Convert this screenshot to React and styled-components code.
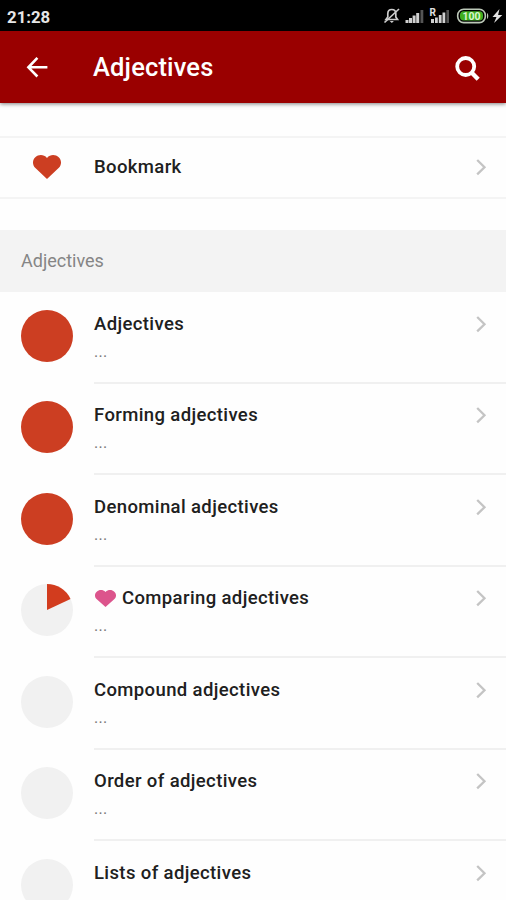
import React from 'react'
import styled, { createGlobalStyle } from 'styled-components'

const GlobalStyle = createGlobalStyle`
  * {
    box-sizing: border-box;
  }
  body {
    margin: 0;
    background: #fefefe;
    font-family: Roboto, "Noto Sans", sans-serif;
  }
  svg {
    display: block;
    flex: none;
  }
`

const Screen = styled.div`
  height: 900px;
  overflow: hidden;
  background: #fefefe;
`

const StatusBar = styled.div`
  display: flex;
  align-items: center;
  justify-content: space-between;
  height: 31px;
  padding: 0 0 0 7px;
  background: #000;
`

const Clock = styled.span`
  padding-top: 2px;
  color: #e6e6e6;
  font-size: 16.8px;
  font-weight: 700;
  line-height: 20px;
`

const Toolbar = styled.header`
  display: flex;
  align-items: center;
  height: 72px;
  padding: 0 25px 0 26px;
  background: #9a0000;
  box-shadow: 0 1px 4px rgba(0, 0, 0, 0.5);
`

const Title = styled.h1`
  flex: 1;
  margin: 0 0 0 45px;
  color: #fff;
  font-size: 25.5px;
  font-weight: 500;
  line-height: 32px;
  letter-spacing: 0.15px;
`

const BookmarkRow = styled.div`
  display: flex;
  align-items: center;
  height: 63px;
  margin: 33px 0 31px;
  padding: 0 18px 2px 33px;
  border-top: 2px solid #f4f4f4;
  border-bottom: 2px solid #f4f4f4;
`

const Label = styled.div`
  display: flex;
  align-items: center;
  flex: 1;
  margin-left: ${props => props.$indent || 0}px;
  color: #202020;
  font-size: 18.5px;
  font-weight: 500;
  line-height: 24px;
  letter-spacing: 0.38px;
`

const SectionHeader = styled.div`
  height: 61.5px;
  padding-left: 21px;
  background: #f3f3f3;
  color: #858585;
  font-size: 18px;
  line-height: 61px;
`

const Item = styled.div`
  display: flex;
  height: 91.5px;
  padding: 18px 0 0 21px;
`

const ItemBody = styled.div`
  flex: 1;
  height: 92px;
  margin: -18px 0 0 21px;
  padding: 20px 18px 0 0;
  border-bottom: 2px solid #f0f0f0;
`

const ItemHead = styled.div`
  display: flex;
  align-items: center;
`

const Subtitle = styled.div`
  margin-top: 4px;
  color: #777;
  font-size: 16px;
  line-height: 24px;
  letter-spacing: 0.3px;
`

const Emoji = styled.span`
  display: block;
  margin: 0 6px 0 1px;
`

const StatusIcons = () => (
  <svg width="130" height="31" viewBox="376 0 130 31">
    {/* muted bell */}
    <g fill="none" stroke="#ccc" strokeWidth="1.7">
      <path d="M386 19.5h11.5l-1.7-2.5v-3.3c0-2.6-1.7-4.2-4-4.2s-4 1.6-4 4.2V17z" />
      <path d="M384.5 22.5L399 9" />
    </g>
    <path d="M389.7 21h4.2l-2.1 2z" fill="#ccc" />
    {/* first sim */}
    <g fill="#d0d0d0">
      <path d="M405.5 20h3v3h-3zM409 18h3v5h-3zM412.6 15.5h3V23h-3zM416.2 13h3v10h-3z" />
      <path d="M420.5 10h2.8v13h-2.8z" fill="#555" />
    </g>
    {/* second sim */}
    <text x="429.5" y="15.5" fill="#e0e0e0" fontSize="10" fontWeight="700">R</text>
    <g fill="#d0d0d0">
      <path d="M431 19h3v4h-3zM435 17.5h2.8V23H435zM438.8 15h2.8v8h-2.8zM442.5 12.5h2.8V23h-2.8z" />
      <path d="M446.4 10h2.6v13h-2.6z" fill="#555" />
    </g>
    {/* battery */}
    <rect x="457.7" y="9.2" width="27.6" height="13.4" rx="6" fill="#000" stroke="#bcc8b8" strokeWidth="1.6" />
    <rect x="460" y="11.2" width="23" height="9.4" rx="3.8" fill="#3fae20" />
    <path d="M487 13c1.7 1 1.7 5 0 6z" fill="#bcc8b8" />
    <text x="471.5" y="19.6" textAnchor="middle" fill="#d9f5cf" fontSize="10.5" fontWeight="700">100</text>
    <path d="M499.5 9l-7 8h4l-2.5 6 8.3-8h-4.2z" fill="#e2e2e2" />
  </svg>
)

const BackArrow = () => (
  <svg width="22" height="22" viewBox="0 0 22 22" fill="none" stroke="#fff" strokeWidth="2.6">
    <path d="M11.4 1.8L2.4 11.3l9 9.2M2.4 11.3h19" />
  </svg>
)

const SearchIcon = () => (
  <svg width="27" height="27" viewBox="0 0 27 27" fill="none" stroke="#fff">
    <circle cx="11.7" cy="12.5" r="8.5" strokeWidth="3.8" />
    <path d="M17.5 18.5l6.7 6.7" strokeWidth="4.4" />
  </svg>
)

const Heart = ({ width, height, color }) => (
  <svg width={width} height={height} viewBox="0 0 28 25" preserveAspectRatio="none" fill={color}>
    <path d="M14 25L2.4 13.6C-.8 10.400-.8 5.400 2.300 2.400 5.500-.7 10.700-.8 14 3c3.300-3.800 8.500-3.700 11.700-.6 3.100 3 3.100 8-.1 11.200z" />
  </svg>
)

const Chevron = () => (
  <svg width="14" height="18" viewBox="0 0 14 18" fill="none" stroke="#c4c4c4" strokeWidth="2.3">
    <path d="M3.2 2l7.3 7.2-7.3 7.2" />
  </svg>
)

const Progress = ({ value }) => {
  const angle = value * 2 * Math.PI
  const x = 26 + 26 * Math.sin(angle)
  const y = 26 - 26 * Math.cos(angle)

  return (
    <svg width="52" height="52" viewBox="0 0 52 52">
      <circle cx="26" cy="26" r="26" fill={value === 1 ? '#cc3e22' : '#f1f1f1'} />
      {value > 0 && value < 1 && (
        <path d={`M26 26V0A26 26 0 0 1 ${x} ${y}z`} fill="#d23c1e" />
      )}
    </svg>
  )
}

const lessons = [
  { title: 'Adjectives', subtitle: '...', value: 1 },
  { title: 'Forming adjectives', subtitle: '...', value: 1 },
  { title: 'Denominal adjectives', subtitle: '...', value: 1 },
  { title: 'Comparing adjectives', subtitle: '...', value: 0.18, bookmarked: true },
  { title: 'Compound adjectives', subtitle: '...', value: 0 },
  { title: 'Order of adjectives', subtitle: '...', value: 0 },
  { title: 'Lists of adjectives', value: 0 },
]

const Lesson = ({ title, subtitle, value, bookmarked }) => (
  <Item>
    <Progress value={value} />
    <ItemBody>
      <ItemHead>
        <Label>
          {bookmarked && <Emoji><Heart width={21} height={17} color="#dc548c" /></Emoji>}
          {title}
        </Label>
        <Chevron />
      </ItemHead>
      {subtitle && <Subtitle>{subtitle}</Subtitle>}
    </ItemBody>
  </Item>
)

const App = () => (
  <>
    <GlobalStyle />
    <Screen>
      <StatusBar>
        <Clock>21:28</Clock>
        <StatusIcons />
      </StatusBar>
      <Toolbar>
        <BackArrow />
        <Title>Adjectives</Title>
        <SearchIcon />
      </Toolbar>
      <BookmarkRow>
        <Heart width={28} height={24} color="#cc3e22" />
        <Label $indent={33}>Bookmark</Label>
        <Chevron />
      </BookmarkRow>
      <SectionHeader>Adjectives</SectionHeader>
      {lessons.map(lesson => <Lesson key={lesson.title} {...lesson} />)}
    </Screen>
  </>
)

export default App
